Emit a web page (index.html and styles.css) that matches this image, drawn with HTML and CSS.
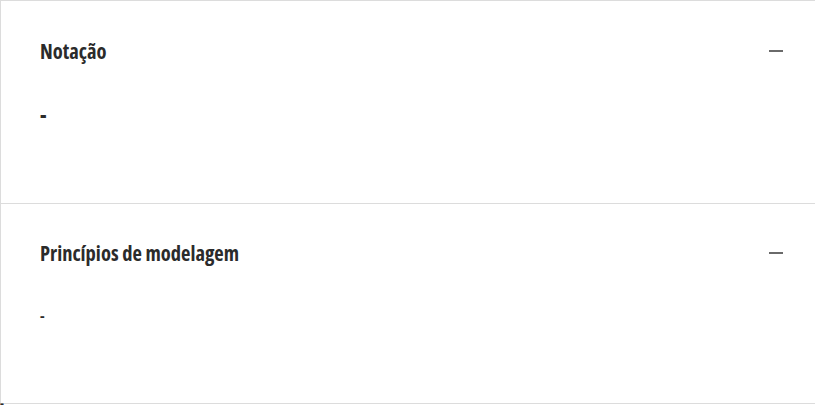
FILE: index.html
```html
<!DOCTYPE html>
<html lang="pt">
<head>
<meta charset="utf-8">
<link rel="stylesheet" href="styles.css">
</head>
<body>
<div class="accordion">
  <section class="item">
    <div class="head">
      <h3 class="title">Notação</h3>
      <span class="toggle"></span>
    </div>
    <div class="body"><p class="strong">-</p></div>
  </section>
  <section class="item">
    <div class="head">
      <h3 class="title">Princípios de modelagem</h3>
      <span class="toggle"></span>
    </div>
    <div class="body"><p class="plain">-</p></div>
  </section>
</div>
<div class="after">-</div>
</body>
</html>
```
FILE: styles.css
```css
html, body {
  margin: 0;
  padding: 0;
  background: #fff;
  overflow: hidden;
}
body {
  font-family: "Open Sans", "DejaVu Sans", sans-serif;
  color: #2b2b2b;
}
.accordion {
  width: 830px;
  border: 1px solid #dcdcdc;
  border-right: none;
  box-sizing: border-box;
}
.item {
  height: 202px;
  box-sizing: border-box;
  padding: 38px 32px 0 39px;
}
.item + .item {
  border-top: 1px solid #dcdcdc;
  height: 200px;
  padding-top: 37px;
}
.head {
  display: flex;
  align-items: center;
  justify-content: space-between;
  width: 743px;
}
.title {
  margin: 0;
  font-size: 20.5px;
  font-weight: 700;
  font-stretch: 75%;
  line-height: 24px;
  color: #2b2b2b;
}
.toggle {
  width: 14px;
  height: 2px;
  background: #6a6a6a;
}
.body p {
  margin: 0;
}
.strong {
  margin-top: 40px !important;
  font-size: 20px;
  font-weight: 800;
  font-stretch: 75%;
  line-height: 24px;
}
.plain {
  margin-top: 38px !important;
  font-size: 15px;
  font-weight: 700;
  font-stretch: 75%;
  line-height: 24px;
}
.after {
  font-size: 12px;
  line-height: 12px;
  font-weight: 700;
  margin-top: -6px;
  padding-left: 0;
}
```
